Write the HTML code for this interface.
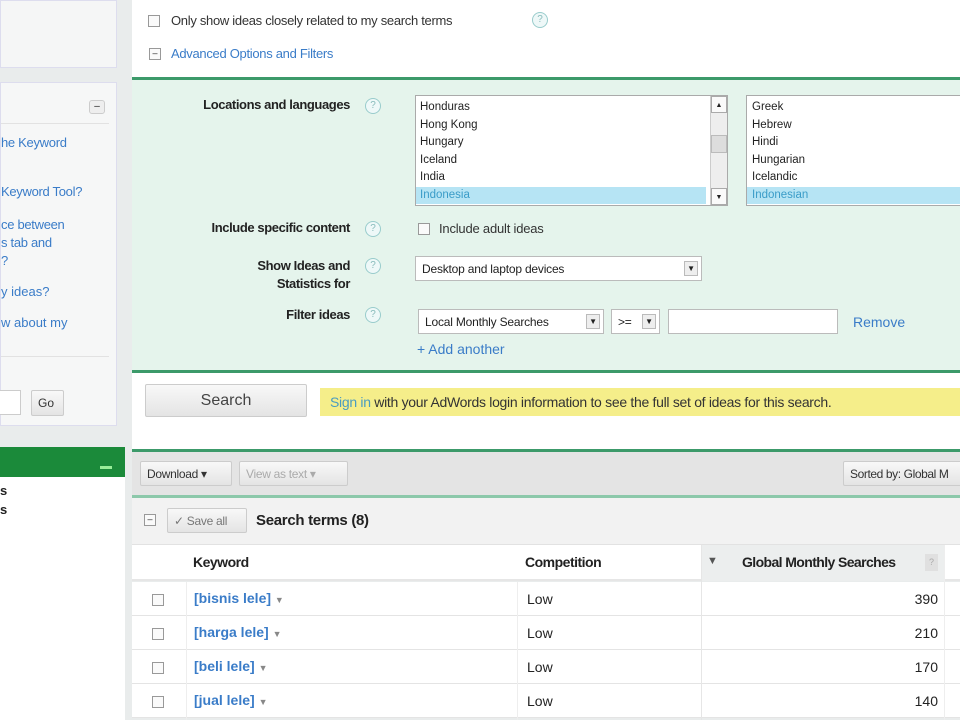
<!DOCTYPE html>
<html><head><meta charset="utf-8"><style>
*{margin:0;padding:0;box-sizing:border-box}
body{width:960px;height:720px;overflow:hidden;background:#e9ecec;font-family:"Liberation Sans",sans-serif;font-size:13px;color:#222;position:relative}
.a{position:absolute}
.lnk{color:#3a7cc8}
.q{position:absolute;width:16px;height:16px;border:1px solid #9cc;border-radius:50%;color:#8bb;font-size:10px;text-align:center;line-height:14px;background:#eef8f8}
.cb{position:absolute;width:12px;height:12px;border:1px solid #999;background:#fafafa}
.lbl{position:absolute;font-weight:bold;font-size:13px;text-align:right;width:200px;letter-spacing:-0.4px}
.lb{position:absolute;background:#fff;border:1px solid #aaa;font-size:11.5px;line-height:17.5px;padding-top:3px}
.sel{position:absolute;background:#fff;border:1px solid #bbb;font-size:12px;padding:5px 6px;height:25px;letter-spacing:-0.2px}
.dd{position:absolute;right:3px;top:4px;width:14px;height:15px;border:1px solid #bbb;background:#eee;font-size:8px;text-align:center;line-height:13px}
.btn{position:absolute;border:1px solid #ccc;border-radius:2px;background:linear-gradient(#f8f8f8,#e4e4e4);font-size:12px;padding:5px 6px;color:#333;white-space:nowrap}
.row{position:absolute;left:132px;width:828px;height:34px;border-bottom:1px solid #e4e4e4;background:#fff}
.kw{position:absolute;left:62px;top:8px;color:#3a7cc8;font-weight:bold;font-size:14px}
.low{position:absolute;left:395px;top:9px;font-size:14px}
.num{position:absolute;right:22px;top:9px;font-size:14px}
</style></head><body>
<div class="a" style="left:0;top:0;width:117px;height:68px;background:#f5f6f6;border:1px solid #dde"></div>
<div class="a" style="left:0;top:82px;width:117px;height:344px;background:#f6f7f7;border:1px solid #dde">
<div class="a" style="left:88px;top:17px;width:16px;height:14px;border:1px solid #ccc;border-radius:3px;background:#eee;font-size:10px;text-align:center;line-height:11px">–</div>
<div class="a" style="left:0;top:40px;width:108px;border-top:1px solid #e2e2e2"></div>
<div class="a lnk" style="left:0;top:52px;font-size:13px;letter-spacing:-0.3px">he Keyword</div>
<div class="a lnk" style="left:0;top:101px;font-size:13px;letter-spacing:-0.3px">Keyword Tool?</div>
<div class="a lnk" style="left:0;top:133px;font-size:13px;line-height:18px;letter-spacing:-0.3px">ce between<br>s tab and<br>?</div>
<div class="a lnk" style="left:0;top:201px;font-size:13px">y ideas?</div>
<div class="a lnk" style="left:0;top:232px;font-size:13px">w about my</div>
<div class="a" style="left:0;top:273px;width:108px;border-top:1px solid #e2e2e2"></div>
<div class="a" style="left:-2px;top:307px;width:22px;height:25px;background:#fff;border:1px solid #ccc"></div>
<div class="btn" style="left:30px;top:307px;height:26px;width:33px">Go</div>
</div>
<div class="a" style="left:0;top:447px;width:125px;height:30px;background:#1b8a3a"><div class="a" style="left:100px;top:19px;width:12px;height:3px;background:#9e9"></div></div>
<div class="a" style="left:0;top:477px;width:125px;height:243px;background:#fff;font-weight:bold;font-size:13px;line-height:19px;padding-top:4px">s<br>s</div>
<div class="a" style="left:132px;top:0;width:828px;height:78px;background:#fff"></div>
<div class="cb" style="left:148px;top:15px"></div>
<div class="a" style="left:171px;top:13px;font-size:13px;color:#333;letter-spacing:-0.3px">Only show ideas closely related to my search terms</div>
<div class="q" style="left:532px;top:12px">?</div>
<div class="cb" style="left:149px;top:48px;font-size:9px;line-height:9px;text-align:center">–</div>
<div class="a lnk" style="left:171px;top:46px;font-size:13px;letter-spacing:-0.3px">Advanced Options and Filters</div>
<div class="a" style="left:132px;top:77px;width:828px;height:296px;background:#e5f4ec;border-top:3px solid #3c9a6a;border-bottom:3px solid #3c9a6a"></div>
<div class="lbl" style="left:150px;top:97px">Locations and languages</div>
<div class="q" style="left:365px;top:98px">?</div>
<div class="lb" style="left:415px;top:95px;width:313px;height:111px;padding-left:4px">Honduras<br>Hong Kong<br>Hungary<br>Iceland<br>India<div style="background:#b6e4f4;color:#3a9cc8;margin-left:-4px;padding-left:4px;width:290px">Indonesia</div>
<div class="a" style="right:0;top:0;width:17px;height:109px;background:#eee;border-left:1px solid #ccc"><div style="height:17px;border:1px solid #aaa;background:#fafafa;font-size:7px;text-align:center">▲</div><div style="margin-top:22px;height:18px;border:1px solid #bbb;background:#ddd"></div><div class="a" style="bottom:0;width:16px;height:17px;border:1px solid #aaa;background:#fafafa;font-size:7px;text-align:center">▼</div></div></div>
<div class="lb" style="left:746px;top:95px;width:230px;height:111px;padding-left:5px">Greek<br>Hebrew<br>Hindi<br>Hungarian<br>Icelandic<div style="background:#b6e4f4;color:#3a9cc8;margin-left:-5px;padding-left:5px">Indonesian</div></div>
<div class="lbl" style="left:150px;top:220px">Include specific content</div>
<div class="q" style="left:365px;top:221px">?</div>
<div class="cb" style="left:418px;top:223px"></div>
<div class="a" style="left:439px;top:221px;font-size:13px;color:#333;letter-spacing:-0.2px">Include adult ideas</div>
<div class="lbl" style="left:150px;top:257px;line-height:18px">Show Ideas and<br>Statistics for</div>
<div class="q" style="left:365px;top:258px">?</div>
<div class="sel" style="left:415px;top:256px;width:287px">Desktop and laptop devices<div class="dd">▼</div></div>
<div class="lbl" style="left:150px;top:307px">Filter ideas</div>
<div class="q" style="left:365px;top:307px">?</div>
<div class="sel" style="left:418px;top:309px;width:186px">Local Monthly Searches<div class="dd">▼</div></div>
<div class="sel" style="left:611px;top:309px;width:49px">&gt;=<div class="dd">▼</div></div>
<div class="a" style="left:668px;top:309px;width:170px;height:25px;background:#fff;border:1px solid #bbb"></div>
<div class="a lnk" style="left:853px;top:314px;font-size:14px">Remove</div>
<div class="a lnk" style="left:417px;top:341px;font-size:14px">+ Add another</div>
<div class="a" style="left:132px;top:373px;width:828px;height:76px;background:#fff"></div>
<div class="btn" style="left:145px;top:384px;width:162px;height:33px;font-size:16px;text-align:center;padding-top:7px;color:#444">Search</div>
<div class="a" style="left:320px;top:388px;width:640px;height:28px;background:#f5ee8a;padding:6px 10px;font-size:14px;white-space:nowrap;color:#333;letter-spacing:-0.3px"><span style="color:#4a9cc0">Sign in</span> with your AdWords login information to see the full set of ideas for this search.</div>
<div class="a" style="left:132px;top:449px;width:828px;height:49px;background:#e4e4e4;border-top:3px solid #3c9a6a;border-bottom:3px solid #8cc8aa"></div>
<div class="btn" style="left:140px;top:461px;width:92px;height:25px;font-size:12px;letter-spacing:-0.3px">Download ▾</div>
<div class="btn" style="left:239px;top:461px;width:109px;height:25px;font-size:12px;color:#aaa;letter-spacing:-0.3px">View as text ▾</div>
<div class="btn" style="left:843px;top:461px;width:130px;height:25px;font-size:12px;letter-spacing:-0.4px">Sorted by: Global M</div>
<div class="a" style="left:132px;top:498px;width:828px;height:47px;background:#f2f2f2;border-bottom:1px solid #e2e2e2"></div>
<div class="cb" style="left:144px;top:514px;font-size:9px;text-align:center;line-height:9px">–</div>
<div class="btn" style="left:167px;top:508px;width:80px;height:25px;font-size:12px;color:#777;letter-spacing:-0.3px">✓ Save all</div>
<div class="a" style="left:256px;top:512px;font-weight:bold;font-size:15px;letter-spacing:-0.3px">Search terms (8)</div>
<div class="a" style="left:132px;top:545px;width:828px;height:36px;background:#fff;border-bottom:2px solid #e6e6e6"></div>
<div class="a" style="left:702px;top:545px;width:242px;height:36px;background:#eceeee"></div>
<div class="a" style="left:193px;top:554px;font-weight:bold;font-size:14px;letter-spacing:-0.5px">Keyword</div>
<div class="a" style="left:525px;top:554px;font-weight:bold;font-size:14px;letter-spacing:-0.5px">Competition</div>
<div class="a" style="left:707px;top:555px;font-size:11px;color:#555">▼</div>
<div class="a" style="left:742px;top:554px;font-weight:bold;font-size:14px;letter-spacing:-0.6px">Global Monthly Searches</div>
<div class="a" style="left:925px;top:554px;width:13px;height:17px;background:#e0e0e0;font-size:9px;color:#aaa;text-align:center;line-height:17px">?</div>
<div class="row" style="top:582px"><div class="cb" style="left:20px;top:12px"></div><div class="kw">[bisnis lele] <span style="font-size:9px;color:#888">▼</span></div><div class="low">Low</div><div class="num">390</div></div>
<div class="row" style="top:616px"><div class="cb" style="left:20px;top:12px"></div><div class="kw">[harga lele] <span style="font-size:9px;color:#888">▼</span></div><div class="low">Low</div><div class="num">210</div></div>
<div class="row" style="top:650px"><div class="cb" style="left:20px;top:12px"></div><div class="kw">[beli lele] <span style="font-size:9px;color:#888">▼</span></div><div class="low">Low</div><div class="num">170</div></div>
<div class="row" style="top:684px"><div class="cb" style="left:20px;top:12px"></div><div class="kw">[jual lele] <span style="font-size:9px;color:#888">▼</span></div><div class="low">Low</div><div class="num">140</div></div>
<div class="a" style="left:186px;top:582px;width:1px;height:138px;background:#eee"></div>
<div class="a" style="left:517px;top:582px;width:1px;height:138px;background:#eee"></div>
<div class="a" style="left:701px;top:545px;width:1px;height:175px;background:#e6e6e6"></div>
<div class="a" style="left:944px;top:545px;width:1px;height:175px;background:#eee"></div>
</body></html>
